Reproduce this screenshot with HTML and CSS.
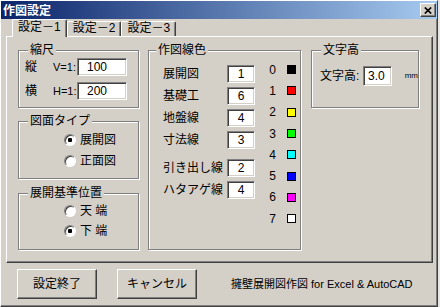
FILE: index.html
```html
<!DOCTYPE html>
<html lang="ja">
<head>
    <meta charset="UTF-8">
    <title>作図設定</title>
    <link rel="stylesheet" href="styles.css">
</head>
<body>
    <div class="window">
        <div class="titlebar">
            <span class="title">作図設定</span>
            <button class="close-btn">
                <svg width="8" height="7" viewBox="0 0 8 7"><path d="M0.8 0.5L7.2 6.5M7.2 0.5L0.8 6.5" stroke="#000" stroke-width="1.7" fill="none"/></svg>
            </button>
        </div>

        <div class="tabs">
            <div class="tab tab-active">設定－1</div>
            <div class="tab">設定－2</div>
            <div class="tab">設定－3</div>
        </div>

        <div class="tab-panel">
            <div class="col-left">
                <!-- 縮尺 -->
                <fieldset class="group scale">
                    <legend>縮尺</legend>
                    <div class="scale-row">
                        <span>縦</span><span class="ratio">V=1:</span>
                        <input class="field field-scale" type="text" value="100" readonly>
                    </div>
                    <div class="scale-row">
                        <span>横</span><span class="ratio">H=1:</span>
                        <input class="field field-scale" type="text" value="200" readonly>
                    </div>
                </fieldset>

                <!-- 図面タイプ -->
                <fieldset class="group view-type">
                    <legend>図面タイプ</legend>
                    <label class="radio-row"><input class="radio" type="radio" name="view" checked>展開図</label>
                    <label class="radio-row"><input class="radio" type="radio" name="view">正面図</label>
                </fieldset>

                <!-- 展開基準位置 -->
                <fieldset class="group base-pos">
                    <legend>展開基準位置</legend>
                    <label class="radio-row"><input class="radio" type="radio" name="base">天 端</label>
                    <label class="radio-row"><input class="radio" type="radio" name="base" checked>下 端</label>
                </fieldset>
            </div>

            <!-- 作図線色 -->
            <fieldset class="group colors">
                <legend>作図線色</legend>
                <div class="colors-body">
                    <div class="line-list">
                        <div class="line-row"><span class="line-label">展開図</span><input class="field field-line" type="text" value="1" readonly></div>
                        <div class="line-row"><span class="line-label">基礎工</span><input class="field field-line" type="text" value="6" readonly></div>
                        <div class="line-row"><span class="line-label">地盤線</span><input class="field field-line" type="text" value="4" readonly></div>
                        <div class="line-row"><span class="line-label">寸法線</span><input class="field field-line" type="text" value="3" readonly></div>
                        <div class="line-row line-row-sep"><span class="line-label">引き出し線</span><input class="field field-line" type="text" value="2" readonly></div>
                        <div class="line-row"><span class="line-label">ハタアゲ線</span><input class="field field-line" type="text" value="4" readonly></div>
                    </div>
                    <div class="color-legend">
                        <div class="color-row"><span class="color-no">0</span><span class="swatch" style="background: #000000"></span></div>
                        <div class="color-row"><span class="color-no">1</span><span class="swatch" style="background: #ff0000"></span></div>
                        <div class="color-row"><span class="color-no">2</span><span class="swatch" style="background: #ffff00"></span></div>
                        <div class="color-row"><span class="color-no">3</span><span class="swatch" style="background: #00ff00"></span></div>
                        <div class="color-row"><span class="color-no">4</span><span class="swatch" style="background: #00ffff"></span></div>
                        <div class="color-row"><span class="color-no">5</span><span class="swatch" style="background: #0000ff"></span></div>
                        <div class="color-row"><span class="color-no">6</span><span class="swatch" style="background: #ff00ff"></span></div>
                        <div class="color-row"><span class="color-no">7</span><span class="swatch" style="background: #ffffff"></span></div>
                    </div>
                </div>
            </fieldset>

            <!-- 文字高 -->
            <fieldset class="group text-height">
                <legend>文字高</legend>
                <div class="height-row">
                    <span class="height-label">文字高:</span>
                    <input class="field field-height" type="text" value="3.0" readonly>
                    <span class="unit">mm</span>
                </div>
            </fieldset>
        </div>

        <div class="footer">
            <button class="btn">設定終了</button>
            <button class="btn">キャンセル</button>
            <span class="credit">擁壁展開図作図 for Excel &amp; AutoCAD</span>
        </div>
    </div>
</body>
</html>
```

FILE: styles.css
```css
* {
    margin: 0;
    padding: 0;
    box-sizing: border-box;
}

body {
    background: #e8e6e2;
    color: #000;
    font-family: "Liberation Sans", "Noto Sans CJK JP", sans-serif;
    font-size: 12px;
    line-height: 14px;
}

.window {
    width: 438px;
    height: 307px;
    background: #d4d0c8;
    border: 1px solid;
    border-color: #fff #404040 #404040 #fff;
    box-shadow: inset -1px -1px 0 #808080;
}

/* title bar */
.titlebar {
    height: 18px;
    display: flex;
    align-items: center;
    justify-content: space-between;
    padding: 0 1px 0 2px;
    background: linear-gradient(to right, #0a246a, #a6caf0);
}

.title {
    color: #fff;
    font-family: "Noto Sans CJK JP", sans-serif;
    font-weight: bold;
}

.close-btn {
    width: 16px;
    height: 14px;
    display: flex;
    align-items: center;
    justify-content: center;
    background: #d4d0c8;
    border: 1px solid;
    border-color: #fff #404040 #404040 #fff;
    box-shadow: inset -1px -1px 0 #808080;
}

/* tabs */
.tabs {
    display: flex;
    align-items: flex-end;
    height: 17px;
    padding-left: 11px;
}

.tab {
    height: 15px;
    padding: 0 5px;
    line-height: 13px;
    border: 1px solid;
    border-bottom: none;
    border-color: #fff #404040 #404040 #fff;
    border-radius: 2px 2px 0 0;
    box-shadow: inset -1px 0 0 #808080;
}

.tab-active {
    height: 18px;
    line-height: 14px;
    margin-bottom: -1px;
    position: relative;
    z-index: 1;
    background: #d4d0c8;
}

.tab-panel {
    width: 427px;
    height: 227px;
    margin-left: 5px;
    display: flex;
    padding: 6px 0 12px 11px;
    border: 1px solid;
    border-color: #fff #404040 #404040 #fff;
    box-shadow: inset -1px -1px 0 #808080;
}

/* group boxes */
.group {
    min-width: 0;
    border: 1px solid #808080;
    box-shadow: inset 1px 1px 0 #fff, 1px 1px 0 #fff;
}

.group legend {
    margin-left: 9px;
    padding: 0 2px;
    line-height: 14px;
    background: #d4d0c8;
}

.col-left {
    width: 121px;
    display: flex;
    flex-direction: column;
}

.scale {
    padding: 1px 0 7px;
}

.scale-row {
    display: grid;
    grid-template-columns: 28px 24px 50px;
    align-items: center;
    padding-left: 6px;
}

.scale-row + .scale-row {
    margin-top: 6px;
}

.ratio {
    font-size: 11px;
}

.view-type {
    margin-top: 6px;
    padding: 5px 0 10px;
}

.view-type .radio-row + .radio-row {
    margin-top: 7px;
}

.base-pos {
    margin-top: 7px;
    padding: 4px 0 11px;
}

.base-pos .radio-row + .radio-row {
    margin-top: 6px;
}

.radio-row {
    display: flex;
    align-items: center;
    gap: 4px;
    height: 14px;
    padding-left: 45px;
}

.radio {
    appearance: none;
    width: 12px;
    height: 12px;
    border-radius: 50%;
    border: 1px solid;
    border-color: #808080 #fff #fff #808080;
    box-shadow: inset 1px 1px 0 #404040;
    background: #fff;
}

.radio:checked {
    background: radial-gradient(circle, #000 0 2px, #fff 2.5px);
}

/* inputs */
.field {
    height: 18px;
    border: 1px solid;
    border-color: #808080 #fff #fff #808080;
    box-shadow: inset 1px 1px 0 #404040, inset -1px -1px 0 #d4d0c8;
    background: #fff;
    color: #000;
    font: inherit;
    outline: none;
}

.field-scale {
    width: 50px;
    padding-left: 9px;
}

.field-line {
    width: 28px;
    text-align: center;
}

.field-height {
    width: 29px;
    height: 20px;
    text-align: right;
    padding-right: 6px;
}

/* line colours */
.colors {
    width: 153px;
    margin-left: 9px;
    padding-top: 8px;
}

.colors legend {
    margin-left: 7px;
}

.colors-body {
    display: flex;
    align-items: flex-start;
}

.line-list {
    padding-left: 14px;
}

.line-row {
    display: flex;
    align-items: center;
    height: 18px;
}

.line-row + .line-row {
    margin-top: 4px;
}

.line-row.line-row-sep {
    margin-top: 10px;
}

.line-label {
    width: 64px;
}

.color-legend {
    margin: -6px 0 0 11px;
}

.color-row {
    display: flex;
    align-items: center;
    height: 21.3px;
}

.color-no {
    width: 13px;
    text-align: center;
}

.swatch {
    width: 9px;
    height: 9px;
    margin-left: 8px;
    border: 1px solid #000;
}

/* text height */
.text-height {
    width: 108px;
    align-self: flex-start;
    margin-left: 10px;
    padding: 9px 0 21px;
}

.height-row {
    display: flex;
    align-items: center;
    padding-left: 8px;
}

.height-label {
    width: 43px;
}

.unit {
    margin-left: 13px;
    font-size: 8px;
}

/* footer */
.footer {
    display: flex;
    align-items: center;
    margin-top: 6px;
    padding-left: 16px;
}

.btn {
    width: 80px;
    height: 30px;
    background: #d4d0c8;
    border: 1px solid;
    border-color: #fff #404040 #404040 #fff;
    box-shadow: inset -1px -1px 0 #808080;
    color: #000;
    font: inherit;
}

.btn + .btn {
    margin-left: 20px;
}

.credit {
    margin-left: 34px;
    font-size: 11px;
}
```
